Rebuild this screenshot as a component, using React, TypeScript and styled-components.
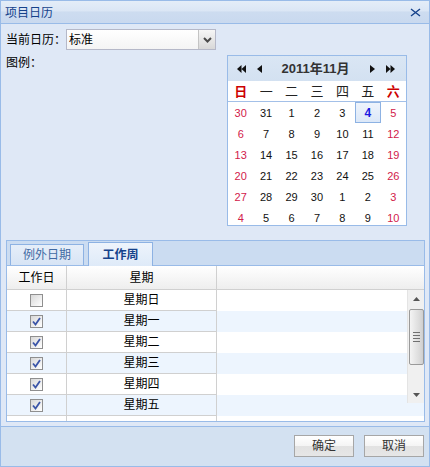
import React from "react";
import styled, { createGlobalStyle, css } from "styled-components";

const Global = createGlobalStyle`
  html, body { margin: 0; padding: 0; background: #dfe8f6; }
  body { font-family: "Liberation Sans", "Noto Sans CJK SC", sans-serif; font-size: 12px; color: #000; }
  * { box-sizing: border-box; }
`;

const Window = styled.div`
  width: 430px;
  height: 467px;
  border: 1px solid #99bbe8;
  background: #dfe8f6;
  display: flex;
  flex-direction: column;
  overflow: hidden;
`;

const TitleBar = styled.div`
  height: 23px;
  flex: none;
  border-bottom: 1px solid #99bbe8;
  background: linear-gradient(#e4edf8 0%, #dbe6f5 45%, #cddcf0 50%, #c9d9ef 100%);
  display: flex;
  align-items: center;
  justify-content: space-between;
  padding: 0 8px 0 4px;
`;

const Title = styled.span`
  color: #15428b;
  font-size: 12px;
  line-height: 14px;
  padding-top: 2px;
`;

const Body = styled.div`
  flex: 1;
  padding: 5px 5px 0 5px;
  display: flex;
  flex-direction: column;
`;

const FieldRow = styled.div`
  display: flex;
  align-items: center;
  height: 21px;
`;

const Label = styled.span`
  font-size: 12px;
  line-height: 14px;
  color: #000;
`;

const FieldLabel = styled(Label)`
  width: 60px;
  padding-top: 1px;
`;

const Select = styled.div`
  width: 150px;
  height: 21px;
  border: 1px solid #b5b8c8;
  background: linear-gradient(#ffffff, #f4f4f4);
  display: flex;
  align-items: center;
  justify-content: space-between;
  padding-left: 2px;
`;

const SelectValue = styled.span`
  font-size: 12px;
  line-height: 14px;
`;

const SelectButton = styled.div`
  width: 17px;
  height: 19px;
  border-left: 1px solid #c4c4c4;
  background: linear-gradient(#f6f6f6, #d8d8d8);
  display: flex;
  align-items: center;
  justify-content: center;
`;

const LegendRow = styled.div`
  display: flex;
  margin-top: 5px;
`;

const LegendLabel = styled(Label)`
  width: 221px;
  padding-top: 1px;
`;

const Calendar = styled.div`
  width: 180px;
  height: 171px;
  border: 1px solid #99bbe8;
  background: #fff;
  overflow: hidden;
`;

const CalHeader = styled.div`
  height: 25px;
  background: linear-gradient(#dae6f4, #d3e1f1);
  display: flex;
  align-items: center;
  padding: 0 11px 0 8px;
`;

const NavBtn = styled.div<{ $gap?: number; $side?: "l" | "r" }>`
  width: 10px;
  display: flex;
  align-items: center;
  justify-content: center;
  ${(p) => (p.$side === "l" ? `margin-left: ${p.$gap ?? 0}px;` : `margin-right: ${p.$gap ?? 0}px;`)}
`;

const CalTitle = styled.div`
  flex: 1;
  text-align: center;
  font-weight: bold;
  font-size: 13px;
  color: #333;
  line-height: 15px;
`;

const WeekRow = styled.div`
  display: grid;
  grid-template-columns: repeat(7, 1fr);
  height: 21px;
  border-bottom: 1px solid #a3c0e8;
`;

const WeekCell = styled.div<{ $red?: boolean }>`
  display: flex;
  align-items: center;
  justify-content: center;
  font-size: 13px;
  font-weight: ${(p) => (p.$red ? "bold" : "normal")};
  color: ${(p) => (p.$red ? "#cc0000" : "#222")};
  line-height: 15px;
`;

const DayGrid = styled.div`
  display: grid;
  grid-template-columns: repeat(7, 1fr);
  grid-auto-rows: 21px;
`;

const DayCell = styled.div<{ $red?: boolean; $sel?: boolean }>`
  display: flex;
  align-items: center;
  justify-content: center;
  font-family: "Liberation Sans", sans-serif;
  font-size: 11px;
  color: ${(p) => (p.$red ? "#d2204a" : "#111")};
  ${(p) =>
    p.$sel &&
    css`
      border: 1px solid #8db2e3;
      background: linear-gradient(#eef4fc, #dce8f8);
      color: #1a1ae0;
      font-weight: bold;
      font-size: 12px;
    `}
`;

const TabPanel = styled.div`
  margin-top: 14px;
  width: 419px;
  height: 182px;
  border: 1px solid #99bbe8;
  background: #fff;
  display: flex;
  flex-direction: column;
  overflow: hidden;
`;

const TabStrip = styled.div`
  height: 25px;
  flex: none;
  background: #cbdcf1;
  border-bottom: 1px solid #99bbe8;
  display: flex;
  align-items: flex-end;
  gap: 4px;
  padding-left: 3px;
`;

const Tab = styled.div<{ $active?: boolean }>`
  height: ${(p) => (p.$active ? 24 : 21)}px;
  width: ${(p) => (p.$active ? 65 : 74)}px;
  border: 1px solid #8db2e3;
  border-bottom: none;
  margin-bottom: ${(p) => (p.$active ? -1 : 0)}px;
  display: flex;
  align-items: center;
  justify-content: center;
  font-size: 12px;
  line-height: 14px;
  ${(p) =>
    p.$active
      ? css`
          background: linear-gradient(#eef4fc, #deeaf8);
          color: #15428b;
          font-weight: bold;
        `
      : css`
          background: linear-gradient(#e6eef9, #d7e4f5);
          color: #416aa3;
        `}
`;

const GridHeader = styled.div`
  height: 24px;
  flex: none;
  display: grid;
  grid-template-columns: 60px 150px 1fr;
  background: linear-gradient(#ffffff, #eeeeee);
  border-bottom: 1px solid #d0d0d0;
`;

const HeadCell = styled.div<{ $last?: boolean }>`
  display: flex;
  align-items: center;
  justify-content: center;
  font-size: 12px;
  line-height: 14px;
  border-right: ${(p) => (p.$last ? "none" : "1px solid #d0d0d0")};
`;

const GridBody = styled.div`
  flex: 1;
  position: relative;
  overflow: hidden;
`;

const Row = styled.div<{ $alt?: boolean }>`
  display: grid;
  grid-template-columns: 60px 150px 1fr;
  height: 21px;
  background: ${(p) => (p.$alt ? "#edf5fe" : "#fff")};
`;

const Cell = styled.div<{ $last?: boolean }>`
  display: flex;
  align-items: center;
  justify-content: center;
  font-size: 12px;
  line-height: 14px;
  ${(p) =>
    !p.$last &&
    css`
      border-right: 1px solid #d0d0d0;
      border-bottom: 1px solid #d0d0d0;
    `}
`;

const Check = styled.div`
  width: 13px;
  height: 13px;
  border: 1px solid #8f8f8f;
  background: linear-gradient(135deg, #d8d8d8, #ffffff);
  display: flex;
  align-items: center;
  justify-content: center;
`;

const ScrollBar = styled.div`
  position: absolute;
  right: 0;
  top: 0;
  width: 17px;
  height: 113px;
  background: #f0f0f0;
  border-left: 1px solid #e4e4e4;
  display: flex;
  flex-direction: column;
  align-items: center;
`;

const ScrollArrow = styled.div`
  height: 17px;
  width: 100%;
  flex: none;
  display: flex;
  align-items: center;
  justify-content: center;
`;

const Thumb = styled.div`
  margin-top: 2px;
  width: 15px;
  height: 56px;
  border: 1px solid #9a9a9a;
  border-radius: 2px;
  background: linear-gradient(90deg, #f4f4f4, #dcdcdc 70%, #cfcfcf);
  display: flex;
  flex-direction: column;
  align-items: center;
  justify-content: center;
  gap: 2px;
`;

const Grip = styled.div`
  width: 7px;
  height: 1px;
  background: #707070;
`;

const Track = styled.div`
  flex: 1;
`;

const Footer = styled.div`
  height: 40px;
  flex: none;
  border-top: 1px solid #99bbe8;
  background: #d3e1f1;
  display: flex;
  justify-content: flex-end;
  align-items: flex-start;
  padding: 8px 5px 0 0;
  gap: 10px;
`;

const Button = styled.button`
  width: 60px;
  height: 22px;
  border: 1px solid #a6a6a6;
  background: linear-gradient(#ffffff 0%, #f4f4f4 50%, #e2e2e2 51%, #e6e6e6 100%);
  font-family: "Liberation Sans", "Noto Sans CJK SC", sans-serif;
  font-size: 12px;
  line-height: 14px;
  color: #333;
  padding: 0;
  display: flex;
  align-items: center;
  justify-content: center;
`;

const CloseIcon = () => (
  <svg width="11" height="9" viewBox="0 0 11 9">
    <path d="M1 1 L10 8 M10 1 L1 8" stroke="#15428b" strokeWidth="1.4" fill="none" />
  </svg>
);

const Chevron = () => (
  <svg width="9" height="6" viewBox="0 0 9 6">
    <path d="M1 1 L4.5 4.5 L8 1" stroke="#4a4a4a" strokeWidth="2" fill="none" />
  </svg>
);

const Tri = ({ dir }: { dir: "l" | "r" }) => (
  <svg width="5" height="8" viewBox="0 0 5 8">
    {dir === "l" ? <path d="M5 0 L0 4 L5 8 Z" fill="#111" /> : <path d="M0 0 L5 4 L0 8 Z" fill="#111" />}
  </svg>
);

const DoubleTri = ({ dir }: { dir: "l" | "r" }) => (
  <svg width="9" height="8" viewBox="0 0 9 8">
    {dir === "l" ? (
      <path d="M4.5 0 L0 4 L4.5 8 Z M9 0 L4.5 4 L9 8 Z" fill="#111" />
    ) : (
      <path d="M0 0 L4.5 4 L0 8 Z M4.5 0 L9 4 L4.5 8 Z" fill="#111" />
    )}
  </svg>
);

const CheckMark = () => (
  <svg width="9" height="9" viewBox="0 0 9 9">
    <path d="M1 4.5 L3.5 7.5 L8 1" stroke="#3b55a8" strokeWidth="1.8" fill="none" />
  </svg>
);

const ArrowUp = () => (
  <svg width="7" height="4" viewBox="0 0 7 4">
    <path d="M0 4 L3.5 0 L7 4 Z" fill="#555" />
  </svg>
);

const ArrowDown = () => (
  <svg width="7" height="4" viewBox="0 0 7 4">
    <path d="M0 0 L3.5 4 L7 0 Z" fill="#555" />
  </svg>
);

const weekdays = ["日", "一", "二", "三", "四", "五", "六"];
const days = [
  30, 31, 1, 2, 3, 4, 5,
  6, 7, 8, 9, 10, 11, 12,
  13, 14, 15, 16, 17, 18, 19,
  20, 21, 22, 23, 24, 25, 26,
  27, 28, 29, 30, 1, 2, 3,
  4, 5, 6, 7, 8, 9, 10,
];

const rows = [
  { name: "星期日", checked: false },
  { name: "星期一", checked: true },
  { name: "星期二", checked: true },
  { name: "星期三", checked: true },
  { name: "星期四", checked: true },
  { name: "星期五", checked: true },
  { name: "", checked: false },
];

export default function App() {
  return (
    <>
      <Global />
      <Window>
        <TitleBar>
          <Title>项目日历</Title>
          <CloseIcon />
        </TitleBar>
        <Body>
          <FieldRow>
            <FieldLabel>当前日历：</FieldLabel>
            <Select>
              <SelectValue>标准</SelectValue>
              <SelectButton>
                <Chevron />
              </SelectButton>
            </Select>
          </FieldRow>
          <LegendRow>
            <LegendLabel>图例：</LegendLabel>
            <Calendar>
              <CalHeader>
                <NavBtn>
                  <DoubleTri dir="l" />
                </NavBtn>
                <NavBtn $side="l" $gap={8}>
                  <Tri dir="l" />
                </NavBtn>
                <CalTitle>2011年11月</CalTitle>
                <NavBtn $side="r" $gap={8}>
                  <Tri dir="r" />
                </NavBtn>
                <NavBtn>
                  <DoubleTri dir="r" />
                </NavBtn>
              </CalHeader>
              <WeekRow>
                {weekdays.map((w, i) => (
                  <WeekCell key={w} $red={i === 0 || i === 6}>
                    {w}
                  </WeekCell>
                ))}
              </WeekRow>
              <DayGrid>
                {days.map((d, i) => (
                  <DayCell key={i} $red={i % 7 === 0 || i % 7 === 6} $sel={i === 5}>
                    {d}
                  </DayCell>
                ))}
              </DayGrid>
            </Calendar>
          </LegendRow>
          <TabPanel>
            <TabStrip>
              <Tab>例外日期</Tab>
              <Tab $active>工作周</Tab>
            </TabStrip>
            <GridHeader>
              <HeadCell>工作日</HeadCell>
              <HeadCell>星期</HeadCell>
              <HeadCell $last />
            </GridHeader>
            <GridBody>
              {rows.map((r, i) => (
                <Row key={i} $alt={i % 2 === 1}>
                  <Cell>
                    {r.name && <Check>{r.checked && <CheckMark />}</Check>}
                  </Cell>
                  <Cell>{r.name}</Cell>
                  <Cell $last />
                </Row>
              ))}
              <ScrollBar>
                <ScrollArrow>
                  <ArrowUp />
                </ScrollArrow>
                <Thumb>
                  <Grip />
                  <Grip />
                  <Grip />
                  <Grip />
                </Thumb>
                <Track />
                <ScrollArrow>
                  <ArrowDown />
                </ScrollArrow>
              </ScrollBar>
            </GridBody>
          </TabPanel>
        </Body>
        <Footer>
          <Button>确定</Button>
          <Button>取消</Button>
        </Footer>
      </Window>
    </>
  );
}
